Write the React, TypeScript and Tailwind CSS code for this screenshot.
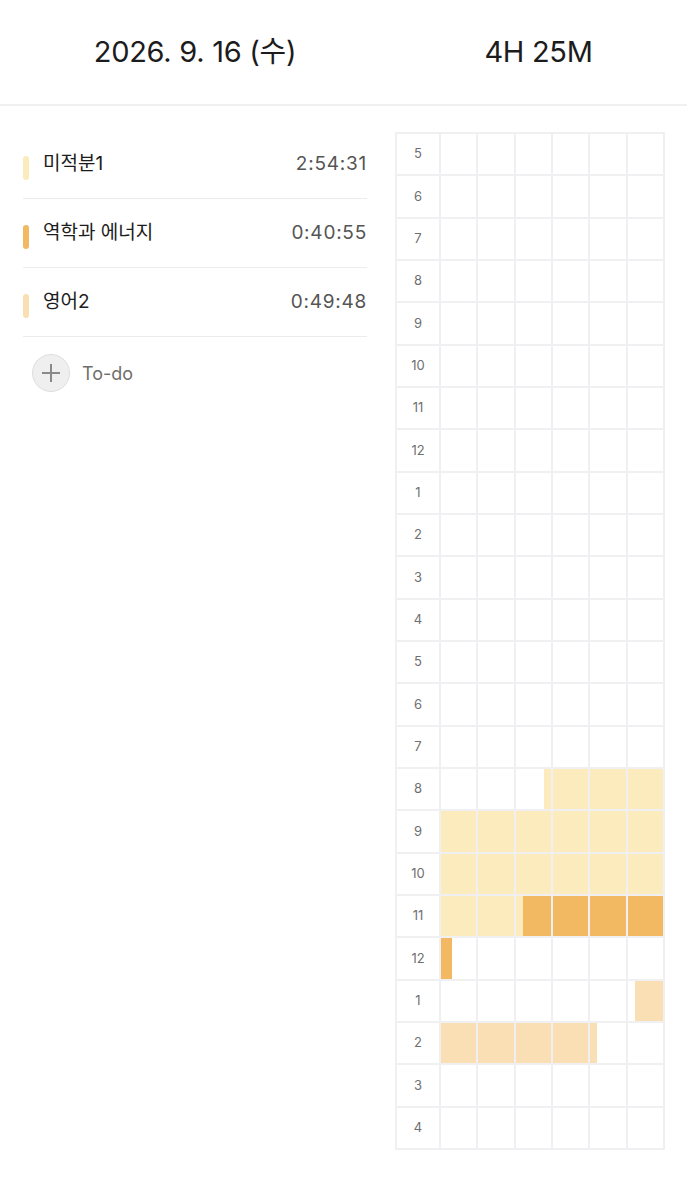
type Seg = { row: number; start: number; end: number; color: string };

const LIGHT = "#fcebbc";
const DARK = "#f2b862";
const PEACH = "#f9dfb3";

const hours = [5, 6, 7, 8, 9, 10, 11, 12, 1, 2, 3, 4, 5, 6, 7, 8, 9, 10, 11, 12, 1, 2, 3, 4];

// minutes within each hour row
const segments: Seg[] = [
  { row: 15, start: 28, end: 60, color: LIGHT },
  { row: 16, start: 0, end: 60, color: LIGHT },
  { row: 17, start: 0, end: 60, color: LIGHT },
  { row: 18, start: 0, end: 22, color: LIGHT },
  { row: 18, start: 22, end: 60, color: DARK },
  { row: 19, start: 0, end: 3, color: DARK },
  { row: 20, start: 52, end: 60, color: PEACH },
  { row: 21, start: 0, end: 42, color: PEACH },
];

const subjects = [
  { name: "미적분1", time: "2:54:31", color: LIGHT },
  { name: "역학과 에너지", time: "0:40:55", color: DARK },
  { name: "영어2", time: "0:49:48", color: PEACH },
];

function Cell({ row, col }: { row: number; col: number }) {
  const from = col * 10;
  const to = from + 10;
  const parts = segments
    .filter((s) => s.row === row && s.end > from && s.start < to)
    .map((s) => ({ a: Math.max(s.start, from) - from, b: Math.min(s.end, to) - from, color: s.color }))
    .sort((x, y) => x.a - y.a);

  let cursor = 0;
  const kids: React.ReactNode[] = [];
  parts.forEach((p, i) => {
    if (p.a > cursor) {
      kids.push(<div key={`g${i}`} style={{ width: `${(p.a - cursor) * 10}%` }} />);
    }
    kids.push(
      <div key={`f${i}`} style={{ width: `${(p.b - p.a) * 10}%`, backgroundColor: p.color }} />
    );
    cursor = p.b;
  });

  return <div className="bg-white flex">{kids}</div>;
}

export default function App() {
  return (
    <div
      className="w-[687px] min-h-[1200px] bg-white text-[#1c1c1c]"
      style={{ fontFamily: '"Inter", "Noto Sans CJK KR", sans-serif' }}
    >
      <div className="flex h-[106px] border-b-2 border-[#f0f0f3]">
        <div className="w-[390px] flex items-center justify-center text-[29px] tracking-[-0.01em]">
          2026. 9. 16 (수)
        </div>
        <div className="flex-1 flex items-center justify-center text-[29px] tracking-[-0.01em]">
          4H 25M
        </div>
      </div>

      <div className="flex">
        <div className="w-[390px] pl-[23px] pr-[23px] pt-[24px]">
          {subjects.map((s) => (
            <div key={s.name} className="h-[69px] flex items-center border-b border-[#ececec]">
              <div className="w-[6px] h-[24px] rounded-full mt-2" style={{ backgroundColor: s.color }} />
              <div className="ml-[14px] text-[19px] text-[#1c1c1c]">{s.name}</div>
              <div className="ml-auto text-[19px] text-[#555555] tracking-[0.04em]">{s.time}</div>
            </div>
          ))}
          <div className="flex items-center mt-[17px] ml-[9px]">
            <div className="w-[38px] h-[38px] rounded-full bg-[#efefef] border border-[#dedede] flex items-center justify-center">
              <svg width="22" height="22" viewBox="0 0 22 22" fill="none" stroke="#8a8a8a" strokeWidth="2">
                <path d="M11 2v18M2 11h18" />
              </svg>
            </div>
            <div className="ml-[12px] text-[18px] text-[#6e6e6e]">To-do</div>
          </div>
        </div>

        <div className="pt-[26px] pl-[5px]">
          <div className="w-[270px] h-[1018px] p-[2px] gap-[2px] bg-[#f0f0f3] grid grid-cols-[42px_repeat(6,minmax(0,1fr))] grid-rows-[repeat(24,minmax(0,1fr))]">
            {hours.map((h, r) => (
              <div key={r} className="contents">
                <div className="bg-white flex items-center justify-center text-[13px] text-[#6f6f6f]">{h}</div>
                {[0, 1, 2, 3, 4, 5].map((c) => (
                  <Cell key={c} row={r} col={c} />
                ))}
              </div>
            ))}
          </div>
        </div>
      </div>
    </div>
  );
}
